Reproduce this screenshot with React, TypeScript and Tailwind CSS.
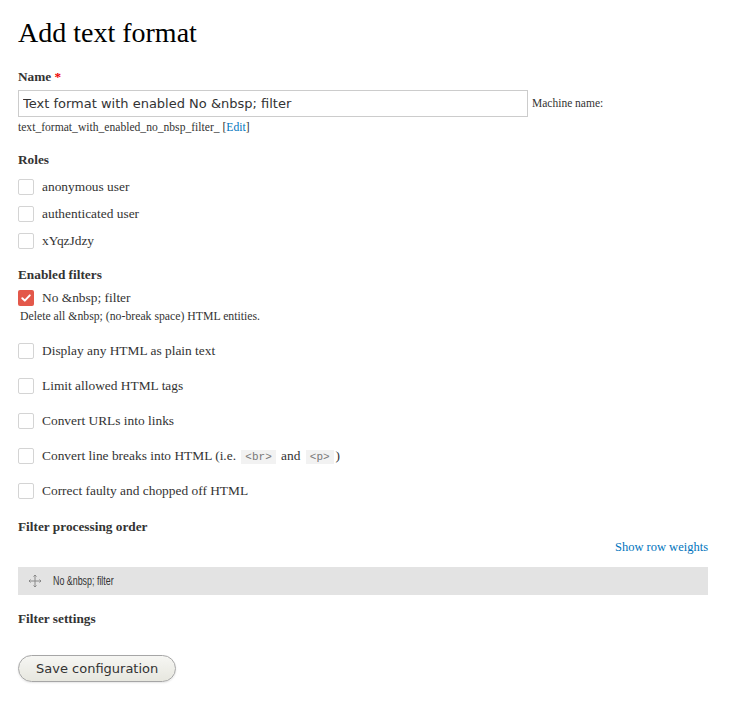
import React from "react";

const serif = { fontFamily: '"Liberation Serif", serif' };

const Checkbox = ({ checked }: { checked?: boolean }) =>
  checked ? (
    <span className="flex h-4 w-4 shrink-0 items-center justify-center rounded-[2px] bg-[#e3584a]">
      <svg width="12" height="12" viewBox="0 0 12 12">
        <path d="M2.3 6.2 L4.8 8.6 L9.8 3.4" fill="none" stroke="#fff" strokeWidth="2" strokeLinecap="round" strokeLinejoin="round" />
      </svg>
    </span>
  ) : (
    <span className="h-4 w-4 shrink-0 rounded-[2px] border border-[#d4d4d4] bg-white" />
  );

const CheckRow = ({
  label,
  checked,
  className,
}: {
  label: React.ReactNode;
  checked?: boolean;
  className?: string;
}) => (
  <div className={`flex h-4 items-center gap-2 ${className || ""}`}>
    <Checkbox checked={checked} />
    <span className="text-[13.4px] leading-4 text-[#333]">{label}</span>
  </div>
);

const Code = ({ children }: { children: React.ReactNode }) => (
  <code
    className="mx-[2px] bg-[#f2f2f2] px-[4px] py-[1px] text-[11px] text-[#777]"
    style={{ fontFamily: '"Liberation Mono", monospace' }}
  >
    {children}
  </code>
);

const App = () => {
  return (
    <div className="min-h-[701px] bg-white pl-[18px] pr-[23px] pt-[15px] text-[#333]" style={serif}>
      <h1 className="text-[28px] leading-[36px] text-[#000]">Add text format</h1>

      <div className="mt-[18px]">
        <label className="block text-[13.3px] font-bold leading-4 text-[#333]">
          Name <span className="text-[#e00]">*</span>
        </label>
        <div className="mt-[5px] flex items-center">
          <input
            type="text"
            readOnly
            value={"Text format with enabled No &nbsp; filter"}
            className="h-[27px] w-[510px] border border-[#ccc] bg-white px-[4px] text-[13px] text-[#333] outline-none"
            style={{ fontFamily: '"DejaVu Sans", sans-serif' }}
          />
          <span className="ml-[4px] text-[11.5px] text-[#333]">Machine name:</span>
        </div>
        <div className="mt-[3px] text-[11.6px] leading-4 text-[#333]">
          text_format_with_enabled_no_nbsp_filter_ [<a className="text-[#0074bd]">Edit</a>]
        </div>
      </div>

      <div className="mt-[16px]">
        <div className="text-[13.3px] font-bold leading-4">Roles</div>
        <div className="mt-[11px] flex flex-col gap-[11px]">
          <CheckRow label="anonymous user" />
          <CheckRow label="authenticated user" />
          <CheckRow label="xYqzJdzy" />
        </div>
      </div>

      <div className="mt-[18px]">
        <div className="text-[13.3px] font-bold leading-4">Enabled filters</div>
        <CheckRow className="mt-[7px]" label={"No &nbsp; filter"} checked />
        <div className="mt-[3px] pl-[2px] text-[11.75px] leading-4">
          Delete all &amp;nbsp; (no-break space) HTML entities.
        </div>
        <div className="mt-[18px] flex flex-col gap-[19px]">
          <CheckRow label="Display any HTML as plain text" />
          <CheckRow label="Limit allowed HTML tags" />
          <CheckRow label="Convert URLs into links" />
          <CheckRow
            label={
              <>
                Convert line breaks into HTML (i.e. <Code>&lt;br&gt;</Code> and <Code>&lt;p&gt;</Code>)
              </>
            }
          />
          <CheckRow label="Correct faulty and chopped off HTML" />
        </div>
      </div>

      <div className="mt-[20px]">
        <div className="text-[13.3px] font-bold leading-4">Filter processing order</div>
        <div className="mt-[4px] text-right text-[12.5px] leading-4 text-[#0074bd]">Show row weights</div>
        <div className="mt-[12px] flex h-[28px] items-center bg-[#e3e3e3] pl-[10px]">
          <svg width="14" height="14" viewBox="0 0 14 14" className="text-[#888]">
            <path
              d="M7 1 V13 M1 7 H13 M5.5 2.5 L7 1 L8.5 2.5 M5.5 11.5 L7 13 L8.5 11.5 M2.5 5.5 L1 7 L2.5 8.5 M11.5 5.5 L13 7 L11.5 8.5"
              fill="none"
              stroke="currentColor"
              strokeWidth="1"
            />
          </svg>
          <span
            className="ml-[11px] inline-block origin-left scale-x-[0.74] whitespace-nowrap text-[12px] text-[#333]"
            style={{ fontFamily: '"Liberation Sans", sans-serif' }}
          >
            No &amp;nbsp; filter
          </span>
        </div>
      </div>

      <div className="mt-[16px] text-[13.3px] font-bold leading-4">Filter settings</div>

      <button
        className="mt-[28px] h-[27px] rounded-full border border-[#a6a6a6] bg-gradient-to-b from-[#f6f6f3] to-[#e7e7df] px-[17px] text-[13px] text-[#333] shadow-[0_1px_2px_rgba(0,0,0,0.1)]"
        style={{ fontFamily: '"DejaVu Sans", sans-serif' }}
      >
        Save configuration
      </button>
    </div>
  );
};

export default App;
